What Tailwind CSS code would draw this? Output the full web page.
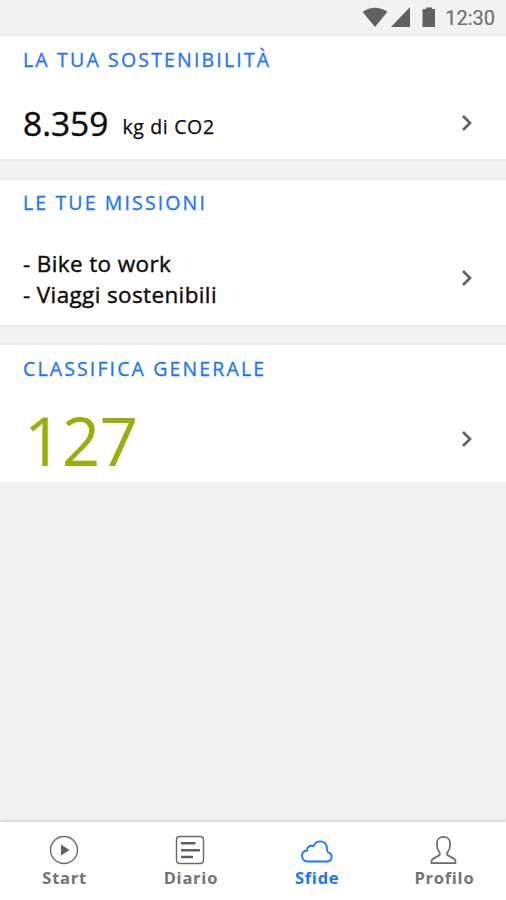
<!DOCTYPE html>
<html lang="it">
<head>
<meta charset="utf-8">
<title>Sfide</title>
<script src="https://cdn.jsdelivr.net/npm/@tailwindcss/browser@4"></script>
</head>
<body class="bg-[#f2f2f2]">
<div class="flex flex-col w-[506px] h-[900px] overflow-hidden bg-[#f2f2f2] font-['Open_Sans',sans-serif] text-[#0c0c0c]">
  <header class="flex h-9 shrink-0 items-center justify-end border-b-2 border-[#e9e9e9] pr-[11px] text-[#606060]">
    <svg class="w-[26px] h-[20px]" viewBox="0 0 26 20" fill="currentColor"><path d="M.5 4.800Q13-3.500 25.500 4.800L13 20Z"/></svg>
    <svg class="ml-[3px] w-[20px] h-[20px]" viewBox="0 0 20 20" fill="currentColor"><path d="M19 0V20H0Z"/></svg>
    <svg class="ml-[11px] w-[14px] h-[20px]" viewBox="0 0 14 20" fill="currentColor"><path d="M4 .5h6v1.500h3v18H.5V2H4Z"/></svg>
    <span class="ml-[9px] mt-[2px] font-[Roboto] text-[20px] leading-none text-[#707070] [-webkit-text-stroke:0.2px_currentColor]">12:30</span>
  </header>
  <main class="flex flex-1 flex-col">
    <section class="flex h-[123px] flex-col bg-white pl-[23px] pr-8">
      <h2 class="mt-[10px] text-[19.5px] leading-7 tracking-[2.17px] text-[#1a75fa] [-webkit-text-stroke:0.3px_currentColor]">LA TUA SOSTENIBILITÀ</h2>
      <div class="mt-[25px] flex h-12 items-center justify-between">
        <p class="flex h-12 items-start"><span class="text-[33.5px] leading-[48px] [-webkit-text-stroke:0.4px_currentColor]">8.359</span><span class="ml-[14px] pt-[14px] text-[19.5px] leading-[28px] tracking-[0.65px] [-webkit-text-stroke:0.25px_currentColor]">kg di CO2</span></p>
        <svg class="w-[14px] h-[18px]" viewBox="0 0 14 18" fill="none" stroke="#626262" stroke-width="2.700"><path d="M3 2l7 7-7 7"/></svg>
      </div>
    </section>
    <div class="h-[21px] border-y-2 border-[#e9e9e9]"></div>
    <section class="flex h-[145px] flex-col bg-white pl-[23px] pr-8">
      <h2 class="mt-[9px] text-[19.5px] leading-7 tracking-[2.13px] text-[#1a75fa] [-webkit-text-stroke:0.3px_currentColor]">LE TUE MISSIONI</h2>
      <div class="mt-[31px] flex items-center justify-between">
        <ul class="text-[22.5px] leading-[31px] tracking-[0.37px] [-webkit-text-stroke:0.4px_currentColor]"><li>- Bike to work</li><li>- Viaggi sostenibili</li></ul>
        <svg class="mb-[2px] w-[14px] h-[18px]" viewBox="0 0 14 18" fill="none" stroke="#626262" stroke-width="2.700"><path d="M3 2l7 7-7 7"/></svg>
      </div>
    </section>
    <div class="h-[20px] border-y-2 border-[#e9e9e9]"></div>
    <section class="flex h-[137px] flex-col bg-white pl-[23px] pr-8">
      <h2 class="mt-[10px] text-[19.5px] leading-7 tracking-[2.13px] text-[#1a75fa] [-webkit-text-stroke:0.3px_currentColor]">CLASSIFICA GENERALE</h2>
      <div class="mt-[16px] flex h-[80px] items-center justify-between">
        <p class="pl-px pt-[2px] text-[67.5px] leading-[80px] tracking-[-0.8px] text-[#99ae0c]">127</p>
        <svg class="w-[14px] h-[18px]" viewBox="0 0 14 18" fill="none" stroke="#626262" stroke-width="2.700"><path d="M3 2l7 7-7 7"/></svg>
      </div>
    </section>
  </main>
  <nav class="grid h-[78px] shrink-0 grid-cols-4 bg-white pl-px pt-3 text-center text-[16.5px] font-bold leading-6 tracking-[0.75px] text-[#737373] shadow-[0_-1px_4px_rgba(0,0,0,0.18)]">
    <a class="flex flex-col items-center"><svg class="h-8 w-8" viewBox="0 0 32 32" fill="none" stroke="#6b6b6b" stroke-width="1.400"><circle cx="16" cy="16" r="13.500"/><path d="M13 10.500v11l8.500-5.500Z" fill="#5f5f5f" stroke="none"/></svg><span class="pl-px">Start</span></a>
    <a class="flex flex-col items-center"><svg class="h-8 w-8" viewBox="0 0 32 32" fill="none" stroke="#6b6b6b" stroke-width="1.400"><rect x="2.500" y="2.500" width="27" height="27" rx="3"/><path d="M7 9.200h14.500M7 16.200h19M7 23h12" stroke="#5f5f5f" stroke-width="2.400"/></svg><span class="pl-px">Diario</span></a>
    <a class="flex flex-col items-center text-[#1a75fa]"><svg class="h-8 w-8" viewBox="0 0 32 32" fill="none" stroke="currentColor" stroke-width="1.800"><path d="M6.500 27.500C-.5 26.500-1 17.500 6 16.500C6 12.500 9.500 11 12.500 12.200C15.500 5.500 26 5.500 26 15C26 17 26 17.500 27 18.200C32.500 20.500 31.500 27.500 26 27.500Z"/></svg><span class="pl-px">Sfide</span></a>
    <a class="flex flex-col items-center"><svg class="h-8 w-8" viewBox="0 0 32 32" fill="none" stroke="#6b6b6b" stroke-width="1.700"><path d="M4.500 29.200V27C4.500 24 12 22.500 13 20.500C14 18.500 10 17 10 12V9C10 .8 23 .8 23 9V12C23 17 19 18.500 20 20.500C21 22.500 28.500 24 28.500 27V29.200Z"/></svg><span class="pl-[3px]">Profilo</span></a>
  </nav>
</div>
</body>
</html>
